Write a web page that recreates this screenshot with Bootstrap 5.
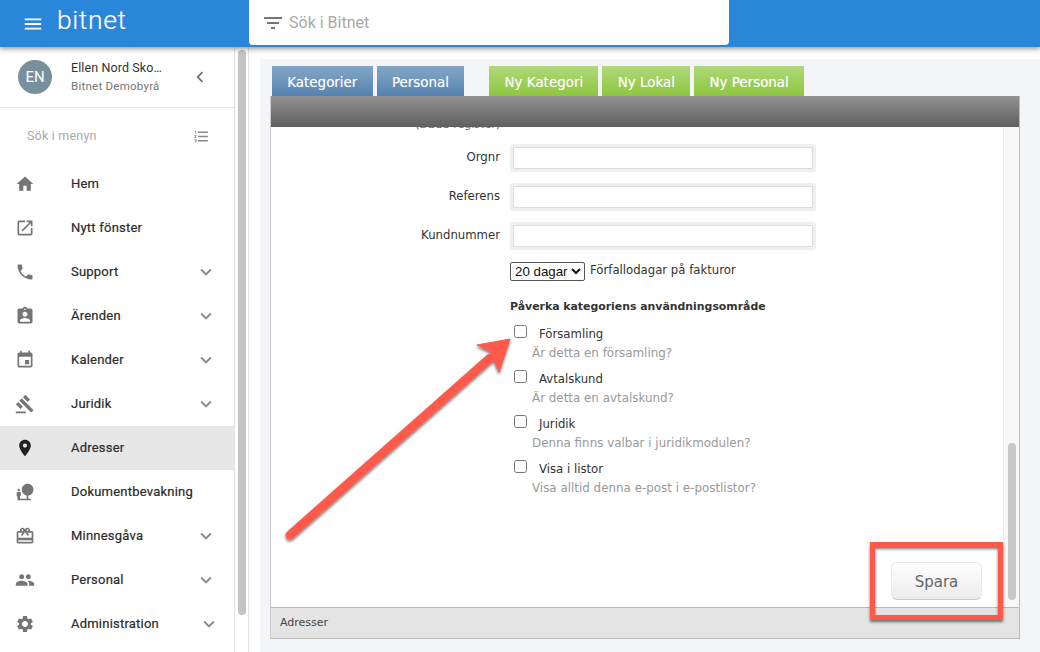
<!DOCTYPE html>
<html lang="sv">
<head>
<meta charset="utf-8">
<title>Bitnet</title>
<link href="https://cdn.jsdelivr.net/npm/bootstrap@5.3.0/dist/css/bootstrap.min.css" rel="stylesheet">
<style>
html,body{height:652px;overflow:hidden;background:#fff}
body{font-family:Roboto,sans-serif;position:relative}
.topbar{height:47px;background:#2a86d8;box-shadow:0 2px 5px rgba(0,0,0,.4);position:relative;z-index:3}
.burger{margin-left:22px;width:22px;height:22px;fill:#fff}
.brand{color:#fff;font-family:Roboto,sans-serif;font-weight:300;font-size:26.5px;line-height:1;margin-left:13px;width:169px;letter-spacing:.6px;position:relative;top:-3px;-webkit-text-stroke:.2px #fff}
.searchbox{width:480px;height:45px;margin-left:23px;background:#fff;border-radius:0 0 4px 4px;align-self:flex-start;color:#a8a8a8;font-size:16px;padding-left:12px;gap:4px}
.searchbox svg{width:24px;height:24px;fill:#757575}
.shell{height:605px}
.sidebar{width:235px;border-right:1px solid #e2e2e2;flex:none;overflow:hidden}
.userbox{height:61px;border-bottom:1px solid #e3e3e3;padding-left:18px}
.avatar{width:34px;height:34px;border-radius:50%;background:#78909c;color:#fff;font-size:15px;margin-right:19px;flex:none}
.uname{font-size:12.5px;color:#333;line-height:15px;letter-spacing:.1px;width:93px}
.uorg{font-size:11.5px;color:#757575;line-height:17px;letter-spacing:.25px;margin-top:3px;white-space:nowrap}
.userbox svg{width:22px;height:22px;fill:#757575;margin-left:25px}
.menusearch{height:54px;padding:2px 24px 0 27px;color:#a9a9a9;font-size:12.5px;letter-spacing:.2px}
.menusearch svg{width:17px;height:17px;fill:#8a8a8a}
.menuitem{height:44px;padding-left:15px;color:#2b2b2b;font-size:13px;font-weight:400;letter-spacing:.22px;-webkit-text-stroke:.2px #2b2b2b}
.menuitem.active{background:#e7e7e7}
.menuitem .ic{width:20px;height:20px;fill:#757575;margin-right:36px;flex:none}
.menuitem.active .ic{fill:#222}
.menuitem .chev{width:22px;height:22px;fill:#8a8a8a;margin-left:auto;margin-right:17px}
.menuitem .chev.shift{margin-right:14px}
.sbtrack{width:14px;flex:none;border-right:1px solid #e2e2e2;padding:3px 2px 0 3px}
.sbthumb{height:565px;background:#c4c4c4;border-radius:4px}
.whitegap{width:11px;flex:none}
.workspace{flex:1;margin-top:12px;background:#f3f5f8;padding-left:10px;height:593px}
.tabrow{height:37px;padding:7px 0 0 2px}
.tabx{height:30px;padding:5px 15.25px 0;color:#fff;font-family:"DejaVu Sans",sans-serif;font-size:13.45px;margin-right:4px;text-shadow:0 0 1px rgba(255,255,255,.4)}
.tabblue{background:linear-gradient(#84a6c6,#5483b0)}
.tabgreen{background:linear-gradient(#b0d87a,#8dc63f)}
.tabspace{margin-left:21px}
.winframe{width:750px;height:543px;border-right:1px solid #bbb;border-bottom:1px solid #bbb;border-left:1px solid #ccc;font-family:"DejaVu Sans",sans-serif}
.winhead{height:31px;background:linear-gradient(#929292,#5f5f5f)}
.winmid{height:480px;background:#fff}
.formarea{flex:1;overflow:hidden;color:#333;font-size:11.7px}
.formshift{margin-top:-10px}
.formline{display:flex;align-items:center}
.lbl{width:240px;text-align:right;padding-right:11px;flex:none}
.fld{width:300px;height:22px;margin-left:2px;border:1px solid #dcdcdc;box-shadow:0 0 0 3px #efefef;border-radius:1px;background:#fff;display:block}
.rowx{height:39px}
.rowfirst{margin-top:5px}
.dbbs{height:16px;font-size:11px;color:#555}
.dbbs a{color:#1a8bd8;text-decoration:none}
.selrow{margin-left:239px;height:20px;margin-top:6px;gap:5px}
.selrow select{font-family:"Liberation Sans",sans-serif;font-size:13.3px;height:19px;width:75px;padding:0;background:#fff;color:#111;border:1px solid #555;border-radius:2px}
.headx{margin:18px 0 0 239px;font-weight:700;line-height:16px;font-size:10.9px}
.chk{margin:10px 0 0 243px;height:45px;position:relative;padding-left:25px}
.chkbox{position:absolute;left:0;top:0;width:13px;height:13px;margin:0;appearance:none;border:1px solid #777;border-radius:2.5px;background:#fff}
.chk .nm{display:block;line-height:16px;padding-top:1px;color:#333}
.chk .hint{display:block;margin-left:-7px;color:#999;line-height:16px;padding-top:3px;font-size:11.9px}
.chk + .chk{margin-top:0}
.winscroll{width:16px;flex:none;background:#f8f8f8;border-left:1px solid #ececec;padding:316px 3px 7px 4px}
.winthumb{height:157px;background:#c8c8c8;border-radius:4px}
.btnrow{position:relative}
.sparabtn{position:absolute;left:620px;top:435px;width:91px;height:38px;border:1px solid #e8e8e8;border-bottom-color:#ccc;border-radius:6px;background:linear-gradient(#fff,#ececec);color:#666;font-size:15px;padding:2px 0 0;font-family:"DejaVu Sans",sans-serif}
.winfoot{height:31px;background:#e4e4e4;border-top:1px solid #bbb;padding-left:9px;color:#444;font-size:11px}
.annot{position:absolute;left:0;top:0;width:1040px;height:652px;z-index:5;pointer-events:none}
</style>
</head>
<body>
<header class="topbar d-flex align-items-center">
  <svg class="burger" viewBox="0 0 24 24"><path d="M3 18h18v-2H3v2zm0-5h18v-2H3v2zm0-7v2h18V6H3z"/></svg>
  <div class="brand">bitnet</div>
  <div class="searchbox d-flex align-items-center">
    <svg viewBox="0 0 24 24"><path d="M10 18h4v-2h-4v2zM3 6v2h18V6H3zm3 7h12v-2H6v2z"/></svg>
    <span>Sök i Bitnet</span>
  </div>
</header>
<div class="shell d-flex">
  <nav class="sidebar">
    <div class="userbox d-flex align-items-center">
      <div class="avatar d-flex align-items-center justify-content-center">EN</div>
      <div><div class="uname text-truncate">Ellen Nord Skoglund</div><div class="uorg">Bitnet Demobyrå</div></div>
      <svg viewBox="0 0 24 24"><path d="M15.41 7.41L14 6l-6 6 6 6 1.41-1.41L10.83 12z"/></svg>
    </div>
    <div class="menusearch d-flex align-items-center justify-content-between">
      <span>Sök i menyn</span>
      <svg viewBox="0 0 24 24"><path d="M2 17h2v.5H3v1h1v.5H2v1h3v-4H2v1zm1-9h1V4H2v1h1v3zm-1 3h1.8L2 13.1v.9h3v-1H3.2L5 10.9V10H2v1zm5-6v2h14V5H7zm0 14h14v-2H7v2zm0-6h14v-2H7v2z"/></svg>
    </div>
    <div class="menuitem d-flex align-items-center"><svg class="ic" viewBox="0 0 24 24"><path d="M10 20v-6h4v6h5v-8h3L12 3 2 12h3v8z"/></svg>Hem</div>
    <div class="menuitem d-flex align-items-center"><svg class="ic" viewBox="0 0 24 24"><path d="M19 19H5V5h7V3H5c-1.11 0-2 .9-2 2v14c0 1.1.89 2 2 2h14c1.1 0 2-.9 2-2v-7h-2v7zM14 3v2h3.59l-9.83 9.83 1.41 1.41L19 6.41V10h2V3h-7z"/></svg>Nytt fönster</div>
    <div class="menuitem d-flex align-items-center"><svg class="ic" viewBox="0 0 24 24"><path d="M6.62 10.79c1.44 2.83 3.76 5.14 6.59 6.59l2.2-2.2c.27-.27.67-.36 1.02-.24 1.12.37 2.33.57 3.57.57.55 0 1 .45 1 1V20c0 .55-.45 1-1 1-9.39 0-17-7.61-17-17 0-.55.45-1 1-1h3.5c.55 0 1 .45 1 1 0 1.25.2 2.45.57 3.57.11.35.03.74-.25 1.02l-2.2 2.2z"/></svg>Support<svg class="chev" viewBox="0 0 24 24"><path d="M16.59 8.59L12 13.17 7.41 8.59 6 10l6 6 6-6z"/></svg></div>
    <div class="menuitem d-flex align-items-center"><svg class="ic" viewBox="0 0 24 24"><path d="M19 3h-4.18C14.4 1.84 13.3 1 12 1c-1.3 0-2.4.84-2.82 2H5c-1.1 0-2 .9-2 2v14c0 1.1.9 2 2 2h14c1.1 0 2-.9 2-2V5c0-1.1-.9-2-2-2zm-7 0c.55 0 1 .45 1 1s-.45 1-1 1-1-.45-1-1 .45-1 1-1zm0 4c1.66 0 3 1.34 3 3s-1.34 3-3 3-3-1.34-3-3 1.34-3 3-3zm6 12H6v-1.4c0-2 4-3.1 6-3.1s6 1.1 6 3.1V19z"/></svg>Ärenden<svg class="chev" viewBox="0 0 24 24"><path d="M16.59 8.59L12 13.17 7.41 8.59 6 10l6 6 6-6z"/></svg></div>
    <div class="menuitem d-flex align-items-center"><svg class="ic" viewBox="0 0 24 24"><path d="M17 12h-5v5h5v-5zM16 1v2H8V1H6v2H5c-1.11 0-1.99.9-1.99 2L3 19c0 1.1.89 2 2 2h14c1.1 0 2-.9 2-2V5c0-1.1-.9-2-2-2h-1V1h-2zm3 18H5V8h14v11z"/></svg>Kalender<svg class="chev" viewBox="0 0 24 24"><path d="M16.59 8.59L12 13.17 7.41 8.59 6 10l6 6 6-6z"/></svg></div>
    <div class="menuitem d-flex align-items-center"><svg class="ic" viewBox="0 0 24 24"><path d="M1 21h12v2H1zM5.245 8.07l2.83-2.827 14.14 14.142-2.828 2.828zM12.317 1l5.657 5.656-2.83 2.83-5.654-5.66zM3.825 9.485l5.657 5.657-2.828 2.828-5.657-5.657z"/></svg>Juridik<svg class="chev" viewBox="0 0 24 24"><path d="M16.59 8.59L12 13.17 7.41 8.59 6 10l6 6 6-6z"/></svg></div>
    <div class="menuitem active d-flex align-items-center"><svg class="ic" viewBox="0 0 24 24"><path d="M12 2C8.13 2 5 5.13 5 9c0 5.25 7 13 7 13s7-7.75 7-13c0-3.87-3.13-7-7-7zm0 9.5c-1.38 0-2.5-1.12-2.5-2.5s1.12-2.5 2.5-2.5 2.5 1.12 2.5 2.5-1.12 2.5-2.5 2.5z"/></svg>Adresser</div>
    <div class="menuitem d-flex align-items-center"><svg class="ic" viewBox="0 0 24 24"><path d="M22.17 9.17c0-3.87-3.13-7-7-7s-7 3.13-7 7c0 3.47 2.52 6.34 5.83 6.89V20H6v-3h1v-4c0-.55-.45-1-1-1H3c-.55 0-1 .45-1 1v4h1v5h16v-2h-3v-3.88c3.47-.41 6.17-3.36 6.17-6.95zM4.5 11c.83 0 1.5-.67 1.5-1.5S5.33 8 4.5 8 3 8.67 3 9.5 3.67 11 4.5 11z"/></svg>Dokumentbevakning</div>
    <div class="menuitem d-flex align-items-center"><svg class="ic" viewBox="0 0 24 24"><path d="M20 6h-2.18c.11-.31.18-.65.18-1 0-1.66-1.34-3-3-3-1.05 0-1.96.54-2.5 1.35l-.5.67-.5-.68C10.96 2.54 10.05 2 9 2 7.34 2 6 3.34 6 5c0 .35.07.69.18 1H4c-1.11 0-1.99.89-1.99 2L2 19c0 1.11.89 2 2 2h16c1.11 0 2-.89 2-2V8c0-1.11-.89-2-2-2zm-5-2c.55 0 1 .45 1 1s-.45 1-1 1-1-.45-1-1 .45-1 1-1zM9 4c.55 0 1 .45 1 1s-.45 1-1 1-1-.45-1-1 .45-1 1-1zm11 15H4v-2h16v2zm0-5H4V8h5.08L7 10.83 8.62 12 11 8.76l1-1.36 1 1.36L15.38 12 17 10.83 14.92 8H20v6z"/></svg>Minnesgåva<svg class="chev" viewBox="0 0 24 24"><path d="M16.59 8.59L12 13.17 7.41 8.59 6 10l6 6 6-6z"/></svg></div>
    <div class="menuitem d-flex align-items-center"><svg class="ic" viewBox="0 0 24 24"><path d="M16 11c1.66 0 2.99-1.34 2.99-3S17.66 5 16 5c-1.66 0-3 1.34-3 3s1.34 3 3 3zm-8 0c1.66 0 2.99-1.34 2.99-3S9.66 5 8 5C6.34 5 5 6.34 5 8s1.34 3 3 3zm0 2c-2.33 0-7 1.17-7 3.5V19h14v-2.5c0-2.33-4.67-3.5-7-3.5zm8 0c-.29 0-.62.02-.97.05 1.16.84 1.97 1.97 1.97 3.45V19h6v-2.5c0-2.33-4.67-3.5-7-3.5z"/></svg>Personal<svg class="chev" viewBox="0 0 24 24"><path d="M16.59 8.59L12 13.17 7.41 8.59 6 10l6 6 6-6z"/></svg></div>
    <div class="menuitem d-flex align-items-center"><svg class="ic" viewBox="0 0 24 24"><path d="M19.14 12.94c.04-.3.06-.61.06-.94 0-.32-.02-.64-.07-.94l2.03-1.58c.18-.14.23-.41.12-.61l-1.92-3.32c-.12-.22-.37-.29-.59-.22l-2.39.96c-.5-.38-1.03-.7-1.62-.94l-.36-2.54c-.04-.24-.24-.41-.48-.41h-3.84c-.24 0-.43.17-.47.41l-.36 2.54c-.59.24-1.13.57-1.62.94l-2.39-.96c-.22-.08-.47 0-.59.22L2.74 8.87c-.12.21-.08.47.12.61l2.03 1.58c-.05.3-.09.63-.09.94s.02.64.07.94l-2.03 1.58c-.18.14-.23.41-.12.61l1.92 3.32c.12.22.37.29.59.22l2.39-.96c.5.38 1.03.7 1.62.94l.36 2.54c.05.24.24.41.48.41h3.84c.24 0 .44-.17.47-.41l.36-2.54c.59-.24 1.13-.56 1.62-.94l2.39.96c.22.08.47 0 .59-.22l1.92-3.32c.12-.22.07-.47-.12-.61l-2.01-1.58zM12 15.6c-1.98 0-3.6-1.62-3.6-3.6s1.62-3.6 3.6-3.6 3.6 1.62 3.6 3.6-1.62 3.6-3.6 3.6z"/></svg>Administration<svg class="chev shift" viewBox="0 0 24 24"><path d="M16.59 8.59L12 13.17 7.41 8.59 6 10l6 6 6-6z"/></svg></div>
  </nav>
  <div class="sbtrack"><div class="sbthumb"></div></div>
  <div class="whitegap"></div>
  <main class="workspace">
    <div class="tabrow d-flex">
      <div class="tabx tabblue d-flex align-items-center">Kategorier</div>
      <div class="tabx tabblue d-flex align-items-center">Personal</div>
      <div class="tabx tabgreen tabspace d-flex align-items-center">Ny Kategori</div>
      <div class="tabx tabgreen d-flex align-items-center">Ny Lokal</div>
      <div class="tabx tabgreen d-flex align-items-center">Ny Personal</div>
    </div>
    <section class="winframe">
      <div class="winhead"></div>
      <div class="winmid d-flex btnrow">
        <div class="formarea">
          <div class="formshift">
            <div class="dbbs"><div class="lbl">(<a href="#">DBBS register</a>)</div></div>
            <div class="formline rowx rowfirst"><div class="lbl">Orgnr</div><input class="fld" type="text" aria-label="Orgnr"></div>
            <div class="formline rowx"><div class="lbl">Referens</div><input class="fld" type="text" aria-label="Referens"></div>
            <div class="formline rowx"><div class="lbl">Kundnummer</div><input class="fld" type="text" aria-label="Kundnummer"></div>
            <div class="formline selrow"><select aria-label="Förfallodagar"><option>20 dagar</option></select><span>Förfallodagar på fakturor</span></div>
            <div class="headx">Påverka kategoriens användningsområde</div>
            <div class="chk"><input class="chkbox" type="checkbox" aria-label="Församling"><span class="nm">Församling</span><span class="hint">Är detta en församling?</span></div>
            <div class="chk"><input class="chkbox" type="checkbox" aria-label="Avtalskund"><span class="nm">Avtalskund</span><span class="hint">Är detta en avtalskund?</span></div>
            <div class="chk"><input class="chkbox" type="checkbox" aria-label="Juridik"><span class="nm">Juridik</span><span class="hint">Denna finns valbar i juridikmodulen?</span></div>
            <div class="chk"><input class="chkbox" type="checkbox" aria-label="Visa i listor"><span class="nm">Visa i listor</span><span class="hint">Visa alltid denna e-post i e-postlistor?</span></div>
          </div>
        </div>
        <div class="winscroll"><div class="winthumb"></div></div>
        <button class="sparabtn" type="button">Spara</button>
      </div>
      <div class="winfoot d-flex align-items-center">Adresser</div>
    </section>
  </main>
</div>
<svg class="annot" viewBox="0 0 1040 652" aria-hidden="true">
  <defs><filter id="ds" x="-10%" y="-10%" width="120%" height="120%"><feDropShadow dx="0" dy="2" stdDeviation="1.5" flood-color="#000" flood-opacity=".55"/></filter></defs>
  <g filter="url(#ds)">
    <path d="M290 535L490 358" stroke="#fd5a4c" stroke-width="9" stroke-linecap="round" fill="none"/>
    <path d="M510 339L477 345L490 351L499 372Z" fill="#fd5a4c" stroke="#fd5a4c" stroke-width="1"/>
    <rect x="872.5" y="544.5" width="128" height="73" fill="none" stroke="#fd5a4c" stroke-width="5"/>
  </g>
</svg>
<script src="https://cdn.jsdelivr.net/npm/bootstrap@5.3.0/dist/js/bootstrap.bundle.min.js"></script>
</body>
</html>
